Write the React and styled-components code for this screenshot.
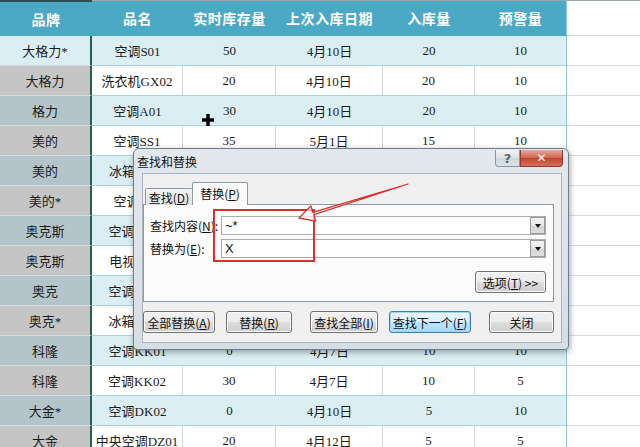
import React from 'react'
import styled, { createGlobalStyle } from 'styled-components'

const GlobalStyle = createGlobalStyle`
    html, body {
        margin: 0;
        padding: 0;
        background: #fff;
    }
    body {
        font-family: "Noto Sans CJK SC", sans-serif;
    }
`

const COLS = '92px 91px 93px 107px 92px 92px 1fr'

const rows = [
    ['大格力*', '空调S01', '50', '4月10日', '20', '10'],
    ['大格力', '洗衣机GX02', '20', '4月10日', '20', '10'],
    ['格力', '空调A01', '30', '4月10日', '20', '10'],
    ['美的', '空调SS1', '35', '5月1日', '15', '10'],
    ['美的', '冰箱BX01', '10', '5月1日', '10', '10'],
    ['美的*', '空调SS2', '20', '5月1日', '10', '10'],
    ['奥克斯', '空调AK01', '10', '4月8日', '10', '5'],
    ['奥克斯', '电视DS01', '15', '4月8日', '10', '5'],
    ['奥克', '空调AK02', '0', '4月8日', '10', '5'],
    ['奥克*', '冰箱AB01', '5', '4月8日', '5', '5'],
    ['科隆', '空调KK01', '0', '4月7日', '10', '10'],
    ['科隆', '空调KK02', '30', '4月7日', '10', '5'],
    ['大金*', '空调DK02', '0', '4月10日', '5', '10'],
    ['大金', '中央空调DZ01', '20', '4月12日', '5', '5'],
]

const headers = ['品牌', '品名', '实时库存量', '上次入库日期', '入库量', '预警量']

const Sheet = styled.div`
    position: relative;
    width: 640px;
    height: 447px;
    overflow: hidden;
    background: #fff;
`
const HeaderRow = styled.div`
    display: grid;
    grid-template-columns: ${COLS};
    height: 36px;
`
const HeaderCell = styled.div`
    display: flex;
    align-items: center;
    justify-content: center;
    box-sizing: border-box;
    background: ${p => p.$blank ? '#fff' : '#4ba9c5'};
    border-top: ${p => p.$first ? '2px solid #2b4f55' : '1px solid #9aa6aa'};
    border-bottom: 1px solid ${p => p.$blank ? '#d9d9d9' : '#4ba9c5'};
    border-right: ${p => p.$last ? '1px solid #8ccadb' : 'none'};
    color: #fff;
    font-weight: 700;
    font-size: 14px;
    letter-spacing: 0.5px;
`
const Row = styled.div`
    display: grid;
    grid-template-columns: ${COLS};
    height: 30px;
`
const Cell = styled.div`
    display: flex;
    align-items: center;
    justify-content: center;
    box-sizing: border-box;
    font-family: "Liberation Serif", "Noto Sans CJK SC", serif;
    font-size: 13px;
    color: #1b1b1b;
    white-space: nowrap;
    background: ${p => p.$band ? '#daeef3' : '#fff'};
    border-bottom: 1px solid #a6d3e0;
    border-right: ${p => p.$last ? '1px solid #8ccadb' : p.$band ? 'none' : '1px solid #cdd8dc'};
`
const BrandCell = styled(Cell)`
    background: ${p => p.$active ? '#daeef3' : p.$band ? '#b4c5ca' : '#c5c5c5'};
    border-bottom: 1px solid #d4dcde;
    border-right: 2px solid #24604d;
`
const BlankCell = styled.div`
    border-bottom: 1px solid #dcdcdc;
`

const Dialog = styled.div`
    position: absolute;
    left: 133px;
    top: 148px;
    width: 436px;
    height: 202px;
    box-sizing: border-box;
    display: flex;
    flex-direction: column;
    background: linear-gradient(#e3e8ec, #d6dee5);
    border: 1px solid #6f7e8b;
    border-radius: 6px 6px 4px 4px;
    box-shadow: 1px 2px 6px rgba(0, 0, 0, 0.35);
`
const TitleBar = styled.div`
    height: 24px;
    display: flex;
    justify-content: space-between;
    padding: 0 5px 0 3px;
`
const Title = styled.div`
    align-self: center;
    font-size: 12px;
    color: #111;
    margin-top: 1px;
`
const Controls = styled.div`
    display: flex;
    margin-top: 1px;
`
const CtrlBtn = styled.div`
    width: ${p => p.$close ? 43 : 25}px;
    height: 17px;
    box-sizing: border-box;
    display: flex;
    align-items: center;
    justify-content: center;
    border: 1px solid ${p => p.$close ? '#8e3a30' : '#8a96a3'};
    border-top: none;
    border-radius: ${p => p.$close ? '0 0 4px 0' : '0 0 0 4px'};
    background: ${p => p.$close
        ? 'linear-gradient(#e9a99e, #d0614f 50%, #c2412d 51%, #d6705c)'
        : 'linear-gradient(#f2f4f6, #dde2e7 50%, #cfd6dd 51%, #dde3e8)'};
    color: ${p => p.$close ? '#fff' : '#5a6570'};
    font-size: ${p => p.$close ? 12 : 13}px;
    font-weight: 700;
    font-family: "DejaVu Sans", sans-serif;
`
const Client = styled.div`
    flex: 1;
    margin: 0 6px 6px 8px;
    background: #f0f0f0;
    border: 1px solid #a9b4be;
    padding: 9px 7px 0 0;
`
const Tabs = styled.div`
    display: flex;
    align-items: flex-end;
    height: 22px;
    padding-left: 2px;
    margin-bottom: -1px;
    position: relative;
`
const Tab = styled.div`
    height: ${p => p.$active ? 23 : 17}px;
    width: ${p => p.$active ? 56 : 48}px;
    margin-left: ${p => p.$active ? -1 : 0}px;
    box-sizing: border-box;
    border: 1px solid #8d99a6;
    border-bottom: none;
    border-radius: 2px 2px 0 0;
    background: ${p => p.$active ? '#fbfbfb' : 'linear-gradient(#f3f3f3, #e2e2e2)'};
    display: flex;
    align-items: center;
    justify-content: center;
    font-size: 12px;
    color: #111;
    z-index: ${p => p.$active ? 2 : 1};
    padding-bottom: ${p => p.$active ? 2 : 0}px;
`
const Panel = styled.div`
    height: 98px;
    box-sizing: border-box;
    border: 1px solid #8d99a6;
    background: #fbfbfb;
    padding: 11px 7px 0 6px;
`
const Form = styled.div`
    display: grid;
    grid-template-columns: 71px 1fr;
    row-gap: 4px;
    align-items: center;
`
const Label = styled.div`
    font-size: 12px;
    color: #111;
`
const Combo = styled.div`
    height: 19px;
    box-sizing: border-box;
    display: flex;
    border: 1px solid #abadb3;
    background: #fff;
`
const ComboText = styled.div`
    flex: 1;
    font-family: "Liberation Sans", "Noto Sans CJK SC", sans-serif;
    font-size: 13px;
    line-height: 17px;
    padding-left: 3px;
    color: #111;
`
const DropBtn = styled.div`
    width: 15px;
    box-sizing: border-box;
    margin: 0;
    border: 1px solid #9a9a9a;
    background: linear-gradient(#f4f4f4, #e6e6e6 50%, #d5d5d5 51%, #dedede);
    display: flex;
    align-items: center;
    justify-content: center;
    &::after {
        content: '';
        border-left: 3.5px solid transparent;
        border-right: 3.5px solid transparent;
        border-top: 4px solid #111;
    }
`
const OptionsRow = styled.div`
    display: flex;
    justify-content: flex-end;
    margin-top: 13px;
`
const Button = styled.div`
    width: ${p => p.$w}px;
    height: 22px;
    box-sizing: border-box;
    display: flex;
    align-items: center;
    justify-content: center;
    border: 1px solid ${p => p.$primary ? '#3c7fb1' : '#707070'};
    border-radius: 3px;
    background: ${p => p.$primary
        ? 'linear-gradient(#eaf6fd, #d9f0fc 50%, #bee6fd 51%, #a7d9f5)'
        : 'linear-gradient(#f2f2f2, #ebebeb 50%, #dddddd 51%, #cfcfcf)'};
    box-shadow: ${p => p.$primary ? 'inset 0 0 0 1px #9fd4f2' : 'inset 0 0 0 1px #fafafa'};
    font-size: 12px;
    color: #111;
    white-space: nowrap;
`
const ButtonRow = styled.div`
    display: flex;
    gap: 18px;
    margin-top: 9px;
`
const ButtonGroup = styled.div`
    display: flex;
    gap: 11px;
`
const Highlight = styled.div`
    position: absolute;
    left: 213px;
    top: 209px;
    width: 102px;
    height: 53px;
    box-sizing: border-box;
    border: 2px solid #d8302c;
    pointer-events: none;
`
const Overlay = styled.svg`
    position: absolute;
    left: 0;
    top: 0;
    pointer-events: none;
`

function Dlg () {
    return (
        <Dialog>
            <TitleBar>
                <Title>查找和替换</Title>
                <Controls>
                    <CtrlBtn>?</CtrlBtn>
                    <CtrlBtn $close>✕</CtrlBtn>
                </Controls>
            </TitleBar>
            <Client>
                <Tabs>
                    <Tab>查找(<u>D</u>)</Tab>
                    <Tab $active>替换(<u>P</u>)</Tab>
                </Tabs>
                <Panel>
                    <Form>
                        <Label>查找内容(<u>N</u>):</Label>
                        <Combo><ComboText>~*</ComboText><DropBtn/></Combo>
                        <Label>替换为(<u>E</u>):</Label>
                        <Combo><ComboText>X</ComboText><DropBtn/></Combo>
                    </Form>
                    <OptionsRow>
                        <Button $w={71}>选项(<u>T</u>)&nbsp;&gt;&gt;</Button>
                    </OptionsRow>
                </Panel>
                <ButtonRow>
                    <ButtonGroup>
                        <Button $w={72}>全部替换(<u>A</u>)</Button>
                        <Button $w={66}>替换(<u>R</u>)</Button>
                    </ButtonGroup>
                    <ButtonGroup>
                        <Button $w={68}>查找全部(<u>I</u>)</Button>
                        <Button $w={82} $primary>查找下一个(<u>F</u>)</Button>
                    </ButtonGroup>
                    <Button $w={66}>关闭</Button>
                </ButtonRow>
            </Client>
        </Dialog>
    )
}

export default function App () {
    return (
        <Sheet>
            <GlobalStyle/>
            <HeaderRow>
                {headers.map((h, i) => (
                    <HeaderCell key={h} $first={i === 0} $last={i === 5}>{h}</HeaderCell>
                ))}
                <HeaderCell $blank/>
            </HeaderRow>
            {rows.map((r, i) => {
                const band = i % 2 === 0
                return (
                    <Row key={i}>
                        <BrandCell $band={band} $active={i === 0}>{r[0]}</BrandCell>
                        {r.slice(1).map((v, j) => (
                            <Cell key={j} $band={band} $last={j === 4}>{v}</Cell>
                        ))}
                        <BlankCell/>
                    </Row>
                )
            })}
            <Dlg/>
            <Highlight/>
            <Overlay width="640" height="447">
                <polygon
                    points="299,218 315.7,221.1 313.9,214.6 408,184 312.8,212.3 310.9,205.9"
                    fill="#fff"
                    fillOpacity="0.6"
                    stroke="#d8302c"
                    strokeWidth="1.3"
                    strokeLinejoin="round"
                />
                <path d="M208 114v12M202 120h12" stroke="#000" strokeWidth="3.5"/>
            </Overlay>
        </Sheet>
    )
}
